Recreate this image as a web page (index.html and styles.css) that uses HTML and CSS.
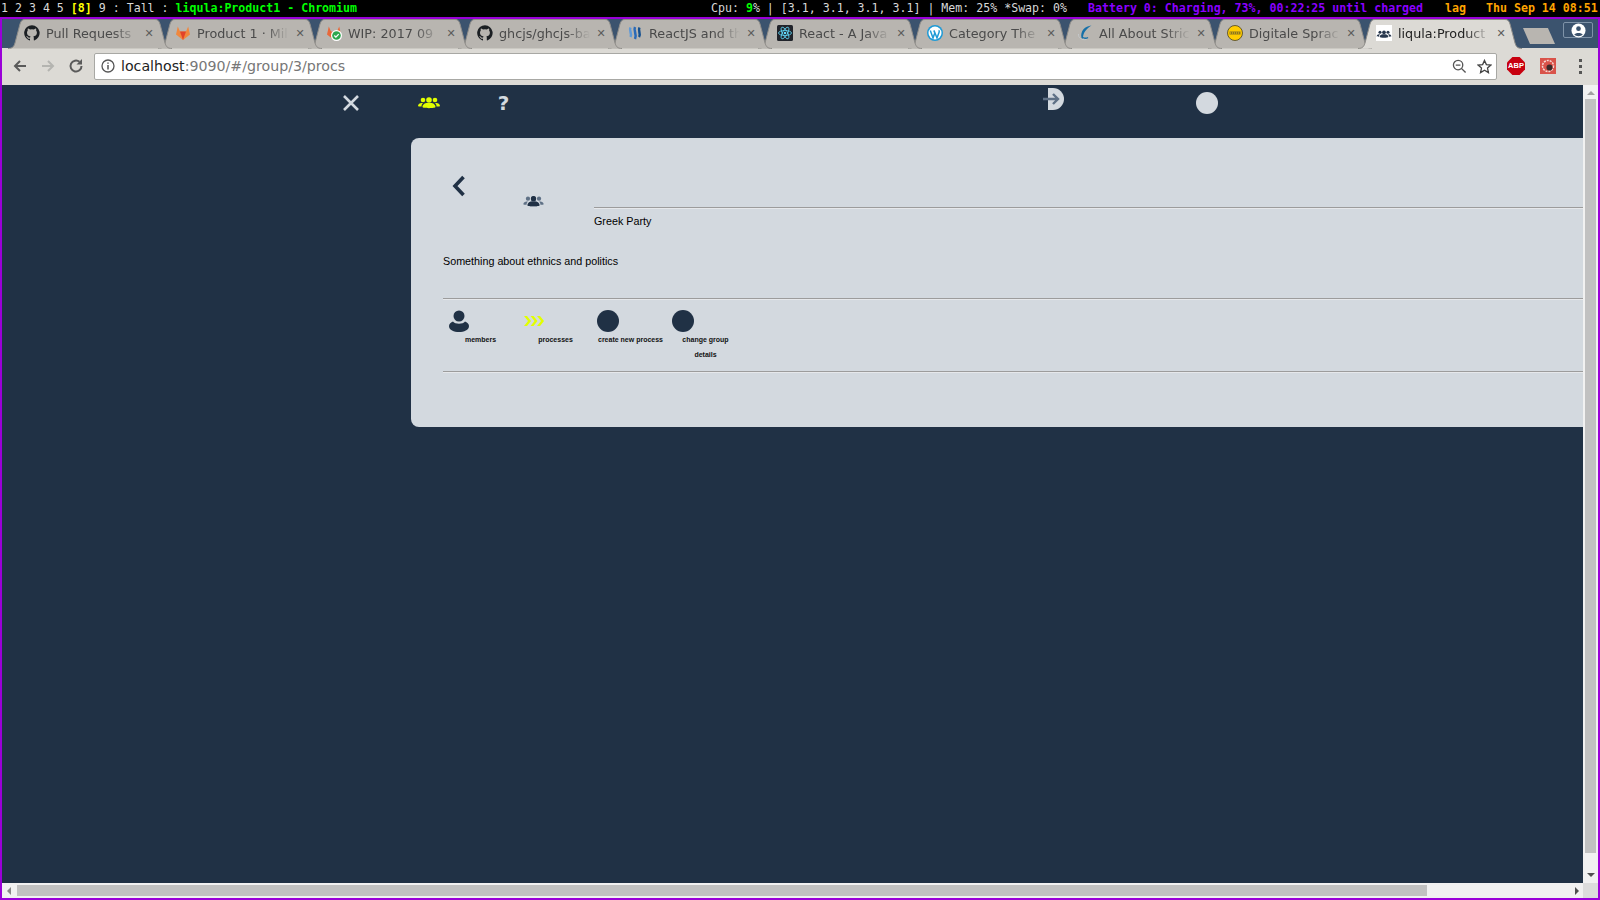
FILE: index.html
```html
<!DOCTYPE html>
<html lang="en">
<head>
    <meta charset="UTF-8">
    <title>liqula:Product1 - Chromium</title>
    <link rel="stylesheet" href="styles.css">
</head>
<body>
    <svg class="defs" width="0" height="0">
        <defs>
            <path id="cat" d="M8 .2a7.800 7.800 0 0 0-2.500 15.200c.4.100.5-.2.500-.4v-1.300c-2.200.5-2.600-1-2.600-1-.4-.9-.9-1.200-.9-1.200-.7-.5.100-.5.100-.5.800.100 1.200.8 1.200.8.700 1.200 1.900.9 2.300.7.100-.5.300-.9.500-1.100-1.700-.2-3.600-.9-3.600-3.800 0-.8.300-1.500.8-2-.1-.2-.3-1 .100-2 0 0 .6-.2 2.100.8a7.200 7.200 0 0 1 3.900 0c1.500-1 2.100-.8 2.100-.8.400 1 .2 1.800.100 2 .5.500.8 1.200.8 2 0 2.900-1.800 3.600-3.600 3.800.3.200.5.700.5 1.400V15c0 .2.100.5.500.4A7.800 7.800 0 0 0 8 .2z"/>
            <path id="fox" d="M8 15 1 9.600 2.800 1.500 5 6.500h6l2.200-5L15 9.600z"/>
            <g id="group">
                <circle cx="5" cy="4" r="2.300"/>
                <circle cx="11" cy="4" r="2.800"/>
                <circle cx="17" cy="4" r="2.300"/>
                <path d="M0 10c0-2 2-3 3.500-3h1.500c-1 1-1.500 2-1.500 3.500C1.500 10.500 0 10.500 0 10zM22 10c0-2-2-3-3.500-3H17c1 1 1.500 2 1.500 3.500 2 0 3.500 0 3.500-.5zM4.500 11c0-2.500 2.500-4 4.500-4h4c2 0 4.500 1.500 4.500 4 0 1.500-13 1.500-13 0z"/>
            </g>
            <path id="tabshape" d="M0 29.500C5 29.500 6 27 7 24L12 5C13 2 14 .5 17 .5H147C150 .5 151 2 152 5L157 24C158 27 159 29.500 164 29.500"/>
        </defs>
    </svg>

    <div class="statusbar">
        <span class="workspaces">1 2 3 4 5 <b class="yellow">[8]</b> 9 : Tall : <span class="green">liqula:Product1 - Chromium</span></span>
        <span class="sysinfo">Cpu: <span class="green">9</span>% | [3.1, 3.1, 3.1, 3.1] | Mem: 25% *Swap: 0%</span>
        <span class="violet">Battery 0: Charging, 73%, 00:22:25 until charged</span>
        <span class="orange">lag</span>
        <span class="orange">Thu Sep 14 08:51</span>
    </div>

    <div class="window">
        <div class="tabstrip">
            <div class="tab">
                <svg class="tab-bg" viewBox="0 0 164 30"><use href="#tabshape"/></svg>
                <svg class="favicon" viewBox="0 0 16 16"><use href="#cat" fill="#1b1f23"/></svg>
                <span class="tab-title">Pull Requests</span>
                <span class="tab-close">✕</span>
            </div>
            <div class="tab">
                <svg class="tab-bg" viewBox="0 0 164 30"><use href="#tabshape"/></svg>
                <svg class="favicon" viewBox="0 0 16 16"><use href="#fox" fill="#f0883e"/><path d="M8 15 5 6.500h6z" fill="#e24329"/></svg>
                <span class="tab-title">Product 1 · Mil</span>
                <span class="tab-close">✕</span>
            </div>
            <div class="tab">
                <svg class="tab-bg" viewBox="0 0 164 30"><use href="#tabshape"/></svg>
                <svg class="favicon" viewBox="0 0 16 16"><use href="#fox" fill="#e8683a"/><circle cx="10.500" cy="10.500" r="5.500" fill="#fff"/><circle cx="10.500" cy="10.500" r="4.300" fill="#2fa84f"/><path d="M8.300 10.500l1.600 1.600 2.800-3" fill="none" stroke="#fff" stroke-width="1.300"/></svg>
                <span class="tab-title">WIP: 2017 09</span>
                <span class="tab-close">✕</span>
            </div>
            <div class="tab">
                <svg class="tab-bg" viewBox="0 0 164 30"><use href="#tabshape"/></svg>
                <svg class="favicon" viewBox="0 0 16 16"><use href="#cat" fill="#1b1f23"/></svg>
                <span class="tab-title">ghcjs/ghcjs-ba</span>
                <span class="tab-close">✕</span>
            </div>
            <div class="tab">
                <svg class="tab-bg" viewBox="0 0 164 30"><use href="#tabshape"/></svg>
                <svg class="favicon" viewBox="0 0 16 16"><g fill="none" stroke-width="2.500"><path d="M3.500 2.500C1.500 6 5.500 8 3.500 12" stroke="#5f9ad8"/><path d="M8 2C6 6 10.500 9 8 14" stroke="#2a6ab8"/><path d="M12.500 2.500c-2 3.500 2 6-.5 9.500" stroke="#15508f"/></g></svg>
                <span class="tab-title">ReactJS and th</span>
                <span class="tab-close">✕</span>
            </div>
            <div class="tab">
                <svg class="tab-bg" viewBox="0 0 164 30"><use href="#tabshape"/></svg>
                <svg class="favicon" viewBox="0 0 16 16"><rect width="16" height="16" rx="1.500" fill="#20232a"/><g fill="none" stroke="#61dafb" stroke-width=".8"><ellipse cx="8" cy="8" rx="6.500" ry="2.500"/><ellipse cx="8" cy="8" rx="6.500" ry="2.500" transform="rotate(60 8 8)"/><ellipse cx="8" cy="8" rx="6.500" ry="2.500" transform="rotate(120 8 8)"/></g><circle cx="8" cy="8" r="1.300" fill="#61dafb"/></svg>
                <span class="tab-title">React - A Java</span>
                <span class="tab-close">✕</span>
            </div>
            <div class="tab">
                <svg class="tab-bg" viewBox="0 0 164 30"><use href="#tabshape"/></svg>
                <svg class="favicon" viewBox="0 0 16 16"><circle cx="8" cy="8" r="8" fill="#1e9ad6"/><circle cx="8" cy="8" r="6.500" fill="#fff"/><path d="M3.300 5.500l2.700 7.500 1.800-5-1-2.500M7 5.500l3 7.500 2-5.500c.4-1 .2-2-.5-2" fill="none" stroke="#1e9ad6" stroke-width="1.500"/></svg>
                <span class="tab-title">Category The</span>
                <span class="tab-close">✕</span>
            </div>
            <div class="tab">
                <svg class="tab-bg" viewBox="0 0 164 30"><use href="#tabshape"/></svg>
                <svg class="favicon" viewBox="0 0 16 16"><path d="M14.500 .5C8 1 3 6 4.500 13c.5 1 1.500 1 1.500 0C6 8 9 4 14.500 .5z" fill="#1570a8"/><path d="M1.500 9c-.5 3.500 3 6.500 8 5.500" fill="none" stroke="#c4c8ca" stroke-width="1"/><path d="M6 12.500c1.500 1 3.500 1 5 0" fill="none" stroke="#1570a8" stroke-width="1.500"/></svg>
                <span class="tab-title">All About Stric</span>
                <span class="tab-close">✕</span>
            </div>
            <div class="tab">
                <svg class="tab-bg" viewBox="0 0 164 30"><use href="#tabshape"/></svg>
                <svg class="favicon" viewBox="0 0 16 16"><circle cx="8" cy="8" r="7.500" fill="#fc0" stroke="#4a4020" stroke-width=".8"/><path d="M2.500 6.500h11v3h-11z" fill="#8a7420"/><path d="M3 8h10" stroke="#fc0" stroke-width="1.200" stroke-dasharray="1 1"/></svg>
                <span class="tab-title">Digitale Sprac</span>
                <span class="tab-close">✕</span>
            </div>
            <div class="tab tab-active">
                <svg class="tab-bg" viewBox="0 0 164 30"><use href="#tabshape"/></svg>
                <svg class="favicon favicon-white" viewBox="-1 -3 24 16"><use href="#group" fill="#26364c"/></svg>
                <span class="tab-title">liqula:Product</span>
                <span class="tab-close">✕</span>
            </div>
            <div class="newtab"></div>
            <div class="profile">
                <svg viewBox="0 0 16 16" width="15" height="15"><circle cx="8" cy="8" r="7.500" fill="#fff"/><circle cx="8" cy="6" r="2.500" fill="#3b536e"/><path d="M3.500 12.500c1-2.500 8-2.500 9 0-2 2-7 2-9 0z" fill="#3b536e"/></svg>
            </div>
        </div>

        <div class="toolbar">
            <svg class="tool-icon" viewBox="0 0 16 16"><path d="M14 8H3M8 3 3 8l5 5" fill="none" stroke="#5a5a5a" stroke-width="2"/></svg>
            <svg class="tool-icon" viewBox="0 0 16 16"><path d="M2 8h11M8 3l5 5-5 5" fill="none" stroke="#b4b4b0" stroke-width="2"/></svg>
            <svg class="tool-icon" viewBox="0 0 16 16"><path d="M13.500 8A5.500 5.500 0 1 1 11.500 3.800" fill="none" stroke="#5a5a5a" stroke-width="2"/><path d="M14 1v5.500H8.500z" fill="#5a5a5a"/></svg>
            <div class="addressbar">
                <svg class="info-icon" viewBox="0 0 14 14"><circle cx="7" cy="7" r="6" fill="none" stroke="#555" stroke-width="1.300"/><path d="M7 6v4.500M7 3.500v1.300" stroke="#555" stroke-width="1.500"/></svg>
                <span class="url">localhost<span class="url-dim">:9090/#/group/3/procs</span></span>
                <svg class="addr-icon" viewBox="0 0 16 16"><circle cx="6.500" cy="6.500" r="5" fill="none" stroke="#555" stroke-width="1.400"/><path d="M4 6.500h5M10 10l4.500 4.500" stroke="#555" stroke-width="1.500"/></svg>
                <svg class="addr-icon" viewBox="0 0 16 16"><path d="M8 1.500l2 4.500 4.800.5-3.600 3.200 1 4.800L8 12l-4.200 2.500 1-4.800L1.200 6.500 6 6z" fill="none" stroke="#444" stroke-width="1.400"/></svg>
            </div>
            <div class="abp">ABP</div>
            <svg class="ext-icon" viewBox="0 0 16 16"><rect width="16" height="16" fill="#d9534a"/><circle cx="8" cy="8" r="5.500" fill="none" stroke="#f5d8d4" stroke-width="1.500" stroke-dasharray="2 1"/><circle cx="9.500" cy="9.500" r="3" fill="#3a2a2a"/></svg>
            <div class="menu-dots"><i></i><i></i><i></i></div>
        </div>

        <div class="viewport">
            <div class="page-col">
                <div class="page">
                    <nav class="topnav">
                        <div class="nav-item">
                            <svg class="nav-close" viewBox="0 0 18 18"><path d="M2 2l14 14M16 2 2 16" stroke="#d3d9df" stroke-width="2.600"/></svg>
                        </div>
                        <div class="nav-item nav-groups">
                            <svg class="nav-group" viewBox="0 0 22 13"><use href="#group" fill="#e2ff00"/></svg>
                        </div>
                        <div class="nav-item">
                            <span class="nav-help">?</span>
                        </div>
                        <div class="nav-item nav-login">
                            <svg viewBox="0 0 22 22" width="22" height="22"><path d="M5 0h5a11 11 0 0 1 0 22H5z" fill="#d3d9df"/><path d="M0 11h14M10 6l5 5-5 5" fill="none" stroke="#5f7186" stroke-width="2.400"/></svg>
                        </div>
                        <div class="nav-item nav-avatar">
                            <span class="dot dot-light"></span>
                        </div>
                    </nav>

                    <section class="card">
                        <div class="card-head">
                            <div class="back-col">
                                <svg viewBox="0 0 14 22" width="14" height="22"><path d="M11.500 2 3 11l8.500 9" fill="none" stroke="#203145" stroke-width="3.600"/></svg>
                            </div>
                            <div class="type-col">
                                <svg viewBox="0 0 22 13" width="21" height="12"><use href="#group" fill="#5f7186"/><circle cx="11" cy="4" r="2.800" fill="#203145"/><path d="M4.500 11c0-2.500 2.500-4 4.500-4h4c2 0 4.500 1.500 4.500 4 0 1.500-13 1.500-13 0z" fill="#203145"/></svg>
                            </div>
                            <div class="title-col">
                                <hr class="rule">
                                <div class="group-name">Greek Party</div>
                            </div>
                        </div>
                        <p class="group-desc">Something about ethnics and politics</p>
                        <hr class="rule">
                        <div class="actions">
                            <div class="action">
                                <svg class="action-icon" viewBox="0 0 22 22"><circle cx="11" cy="6" r="5.500" fill="#203145"/><path d="M1 16c0-2 2-4 4-4.500 2 3 10 3 12 0 2 .5 4 2.500 4 4.500 0 8-20 8-20 0z" fill="#203145"/></svg>
                                <div class="action-label">members</div>
                            </div>
                            <div class="action">
                                <svg class="action-icon" viewBox="0 0 22 22"><path d="M1 6h3l4 5-4 5H1l4-5zM7.500 6h3l4 5-4 5h-3l4-5zM14 6h3l4 5-4 5h-3l4-5z" fill="#e2ff00"/></svg>
                                <div class="action-label">processes</div>
                            </div>
                            <div class="action">
                                <span class="dot dot-dark"></span>
                                <div class="action-label">create new process</div>
                            </div>
                            <div class="action">
                                <span class="dot dot-dark"></span>
                                <div class="action-label">change group details</div>
                            </div>
                        </div>
                        <hr class="rule">
                    </section>
                </div>
                <div class="hscroll">
                    <span class="arrow arrow-left"></span>
                    <div class="hthumb"></div>
                    <span class="arrow arrow-right"></span>
                </div>
            </div>
            <div class="vscroll-col">
                <div class="vscroll">
                    <span class="arrow arrow-up"></span>
                    <div class="vthumb"></div>
                    <span class="arrow arrow-down"></span>
                </div>
                <div class="corner"></div>
            </div>
        </div>
    </div>
</body>
</html>
```

FILE: styles.css
```css
* {
    margin: 0;
    padding: 0;
    box-sizing: border-box;
}

html, body {
    height: 100%;
    overflow: hidden;
}

body {
    display: flex;
    flex-direction: column;
    background: #000;
    font-family: 'Liberation Sans', Arial, sans-serif;
}

.defs {
    position: absolute;
}

/* xmobar */
.statusbar {
    display: flex;
    gap: 20px;
    height: 17px;
    line-height: 16px;
    flex: none;
    padding-left: 1px;
    background: #000;
    color: #d8d8d8;
    font-family: 'DejaVu Sans Mono', monospace;
    font-size: 11.6px;
    white-space: pre;
}

.workspaces {
    width: 690px;
}

.violet {
    margin-left: 1px;
}

.violet + .orange {
    margin-left: 2px;
}

.yellow { color: #ffff00; font-weight: bold; }
.green { color: #00ff00; font-weight: bold; }
.violet { color: #8a00ff; font-weight: bold; }
.orange { color: #ffa500; font-weight: bold; }

.window {
    flex: 1;
    display: flex;
    flex-direction: column;
    min-height: 0;
    border: 2px solid #9a00d8;
}

/* tabs */
.tabstrip {
    display: flex;
    height: 29px;
    flex: none;
    padding-left: 6px;
    background: #3b536e;
}

.tab {
    position: relative;
    display: flex;
    align-items: center;
    flex: none;
    width: 164px;
    height: 30px;
    margin-right: -14px;
    padding: 0 14px 2px 19px;
    color: #4a4a4a;
    font-family: 'DejaVu Sans', sans-serif;
    font-size: 12.75px;
}

.tab:nth-child(1) { z-index: 10; padding-left: 16px; padding-right: 16px; }
.tab:nth-child(2) { z-index: 9; padding-left: 17px; padding-right: 15px; }
.tab:nth-child(3) { z-index: 8; padding-left: 18px; }
.tab:nth-child(4) { z-index: 7; }
.tab:nth-child(5) { z-index: 6; }
.tab:nth-child(6) { z-index: 5; }
.tab:nth-child(7) { z-index: 4; }
.tab:nth-child(8) { z-index: 3; }
.tab:nth-child(9) { z-index: 2; }
.tab.tab-active { z-index: 11; color: #222; padding-left: 18px; }

.tab-bg {
    position: absolute;
    left: 0;
    top: 0;
    width: 164px;
    height: 30px;
    fill: #b8b5b0;
    stroke: #8f8d89;
    stroke-width: 1;
}

.tab-active .tab-bg {
    fill: #dcdad5;
}

.favicon, .tab-title, .tab-close {
    position: relative;
}

.favicon {
    flex: none;
    width: 16px;
    height: 16px;
    margin-right: 6px;
}

.favicon-white {
    background: #fff;
}

.tab-title {
    flex: 1;
    overflow: hidden;
    white-space: nowrap;
    -webkit-mask-image: linear-gradient(to right, #000 72%, transparent 98%);
    mask-image: linear-gradient(to right, #000 72%, transparent 98%);
}

.tab-close {
    flex: none;
    width: 14px;
    margin-left: 2px;
    color: #5c5c5c;
    font-size: 11px;
    font-weight: bold;
    text-align: center;
}

.newtab {
    flex: none;
    width: 32px;
    height: 16px;
    margin: 9px 0 0 15px;
    background: #b8b5b0;
    clip-path: polygon(0 0, 78% 0, 100% 100%, 22% 100%);
}

.profile {
    display: flex;
    align-items: center;
    justify-content: center;
    flex: none;
    width: 30px;
    height: 16px;
    margin: 3px 0 0 8px;
    border: 1px solid #7f93a8;
    border-radius: 2px;
}

/* toolbar */
.toolbar {
    display: flex;
    align-items: center;
    flex: none;
    height: 37px;
    padding: 0 0 1px 10px;
    background: #dcdad5;
}

.tool-icon {
    flex: none;
    width: 16px;
    height: 16px;
    margin-right: 12px;
}

.addressbar {
    display: flex;
    align-items: center;
    flex: none;
    width: 1403px;
    height: 27px;
    margin-left: -2px;
    padding: 0 4px 0 6px;
    background: #fff;
    border: 1px solid #a8a8a4;
    border-radius: 2px;
}

.info-icon {
    flex: none;
    width: 14px;
    height: 14px;
    margin-right: 6px;
}

.url {
    flex: 1;
    color: #222;
    font-family: 'DejaVu Sans', sans-serif;
    font-size: 14.2px;
}

.url-dim {
    color: #777;
}

.addr-icon {
    flex: none;
    width: 15px;
    height: 15px;
    margin-left: 10px;
}

.abp {
    flex: none;
    width: 18px;
    height: 18px;
    margin-left: 10px;
    background: #c8000f;
    clip-path: polygon(30% 0, 70% 0, 100% 30%, 100% 70%, 70% 100%, 30% 100%, 0 70%, 0 30%);
    color: #fff;
    font-size: 7.500px;
    font-weight: bold;
    line-height: 18px;
    text-align: center;
}

.ext-icon {
    flex: none;
    width: 16px;
    height: 16px;
    margin-left: 15px;
}

.menu-dots {
    display: flex;
    flex-direction: column;
    gap: 3px;
    flex: none;
    margin-left: 23px;
}

.menu-dots i {
    display: block;
    width: 3px;
    height: 3px;
    background: #555;
}

/* page */
.viewport {
    flex: 1;
    display: flex;
    min-height: 0;
}

.page-col {
    flex: 1;
    display: flex;
    flex-direction: column;
    min-width: 0;
}

.page {
    flex: 1;
    min-height: 0;
    overflow: hidden;
    background: #203145;
}

.topnav {
    display: flex;
    align-items: flex-start;
    height: 53px;
    padding-left: 311px;
}

.nav-item {
    display: flex;
    justify-content: center;
    align-items: center;
    flex: none;
    width: 75px;
    height: 35px;
}

.nav-groups {
    margin-left: 3px;
}

.nav-close {
    width: 18px;
    height: 18px;
}

.nav-group {
    width: 22px;
    height: 13px;
}

.nav-help {
    color: #d3d9df;
    font-family: 'DejaVu Sans', sans-serif;
    font-size: 20px;
    font-weight: bold;
}

.nav-item.nav-login {
    margin: -4px 0 0 475px;
}

.nav-item.nav-avatar {
    margin-left: 78px;
}

.dot {
    display: block;
    flex: none;
    width: 22px;
    height: 22px;
    border-radius: 50%;
}

.dot-light { background: #d3d9df; }
.dot-dark { background: #203145; margin-left: 4px; }

.card {
    width: 1400px;
    height: 289px;
    margin-left: 409px;
    padding: 36px 0 0 32px;
    background: #d3d9df;
    border-radius: 8px 0 0 8px;
    color: #000;
}

.card-head {
    display: flex;
    height: 62px;
}

.back-col {
    flex: none;
    width: 76px;
    padding: 1px 0 0 9px;
}

.type-col {
    flex: none;
    width: 75px;
    padding-top: 19px;
    padding-left: 4px;
}

.title-col {
    flex: 1;
    padding-top: 33px;
}

.rule {
    display: block;
    height: 2px;
    border: none;
    border-top: 1px solid #9c9c9c;
    border-bottom: 1px solid #e6e8eb;
}

.group-name {
    margin-top: 6px;
    font-size: 10.75px;
}

.group-desc {
    height: 62px;
    padding-top: 19px;
    font-size: 10.75px;
}

.actions {
    display: flex;
    height: 71px;
    padding-top: 10px;
}

.action {
    flex: none;
    width: 75px;
}

.action-icon {
    display: block;
    width: 22px;
    height: 22px;
    margin-left: 5px;
}

.action-label {
    padding: 0 4px;
    color: #111;
    font-size: 7px;
    font-weight: bold;
    line-height: 15px;
    text-align: center;
}

/* scrollbars */
.hscroll {
    display: flex;
    align-items: center;
    flex: none;
    height: 15px;
    background: #f1f1f1;
}

.hthumb {
    width: 1410px;
    height: 11px;
    margin-left: 6px;
    background: #c1c1c1;
}

.vscroll-col {
    display: flex;
    flex-direction: column;
    flex: none;
    width: 15px;
}

.vscroll {
    flex: 1;
    display: flex;
    flex-direction: column;
    align-items: center;
    min-height: 0;
    padding: 6px 0;
    background: #f1f1f1;
}

.vthumb {
    width: 11px;
    height: 754px;
    margin-top: 4px;
    background: #c1c1c1;
}

.corner {
    height: 15px;
    flex: none;
    background: #dcdcdc;
}

.arrow {
    display: block;
    flex: none;
    width: 0;
    height: 0;
    border: 4px solid transparent;
}

.arrow-left { border-right-color: #888; border-left-width: 0; margin-left: 5px; }
.arrow-right { border-left-color: #505050; border-right-width: 0; margin-left: auto; margin-right: 4px; }
.arrow-up { border-bottom-color: #a0a0a0; border-top-width: 0; }
.arrow-down { border-top-color: #505050; border-bottom-width: 0; margin-top: auto; }
```
